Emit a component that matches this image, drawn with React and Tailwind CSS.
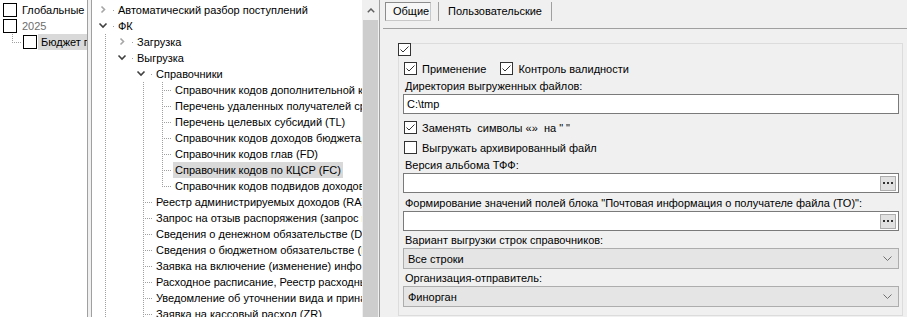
import React from 'react';

const dots = (n, fn) => Array.from({ length: n }, (_, i) => fn(i));

// one 19x16 cell of tree guide lines
function Guide({ kind }) {
  return (
    <svg width="19" height="16" className="shrink-0" shapeRendering="crispEdges">
      {(kind === 'line' || kind === 'tee') &&
        dots(8, (i) => <rect key={'v' + i} x="9" y={i * 2} width="1" height="1" fill="#a0a0a0" />)}
      {kind === 'ell' &&
        dots(5, (i) => <rect key={'v' + i} x="9" y={i * 2} width="1" height="1" fill="#a0a0a0" />)}
      {(kind === 'tee' || kind === 'ell') &&
        dots(5, (i) => <rect key={'h' + i} x={9 + i * 2} y="8" width="1" height="1" fill="#a0a0a0" />)}
      {kind === 'col' && (
        <>
          <polyline points="5.5,4.5 8.5,7.5 5.5,10.5" fill="none" stroke="#a6a6a6" strokeWidth="1.6" shapeRendering="auto" />
          <rect x="17" y="8" width="1" height="1" fill="#a0a0a0" />
        </>
      )}
      {kind === 'exp' && (
        <>
          <polyline points="3.5,5.5 7,9 10.5,5.5" fill="none" stroke="#404040" strokeWidth="1.6" shapeRendering="auto" />
          <rect x="17" y="8" width="1" height="1" fill="#a0a0a0" />
        </>
      )}
    </svg>
  );
}

const L = ['line', 'none', 'line', 'tee'];
const R = ['line', 'none', 'tee'];

const midRows = [
  { t: 'Автоматический разбор поступлений', g: ['col'] },
  { t: 'ФК', g: ['exp'] },
  { t: 'Загрузка', g: ['line', 'col'] },
  { t: 'Выгрузка', g: ['line', 'exp'] },
  { t: 'Справочники', g: ['line', 'none', 'exp'] },
  { t: 'Справочник кодов дополнительной классификации', g: L },
  { t: 'Перечень удаленных получателей средств', g: L },
  { t: 'Перечень целевых субсидий (TL)', g: L },
  { t: 'Справочник кодов доходов бюджета, администрируемых', g: L },
  { t: 'Справочник кодов глав (FD)', g: L },
  { t: 'Справочник кодов по КЦСР (FC)', g: L, sel: true },
  { t: 'Справочник кодов подвидов доходов (FP)', g: ['line', 'none', 'line', 'ell'] },
  { t: 'Реестр администрируемых доходов (RA)', g: R },
  { t: 'Запрос на отзыв распоряжения (запрос на аннулирование)', g: R },
  { t: 'Сведения о денежном обязательстве (DO)', g: R },
  { t: 'Сведения о бюджетном обязательстве (BO)', g: R },
  { t: 'Заявка на включение (изменение) информации', g: R },
  { t: 'Расходное расписание, Реестр расходных расписаний', g: R },
  { t: 'Уведомление об уточнении вида и принадлежности платежа', g: R },
  { t: 'Заявка на кассовый расход (ZR)', g: R },
];

function TreeBox() {
  return <div className="w-[14px] h-[14px] shrink-0 border border-black bg-white" />;
}

function Check({ on = true }) {
  return (
    <svg width="13" height="13" className="shrink-0" shapeRendering="crispEdges">
      <rect x="0.5" y="0.5" width="12" height="12" fill="#fff" stroke="#333" />
      {on && (
        <polyline points="2.5,6.5 5,9 10.5,3.5" fill="none" stroke="#333" strokeWidth="1" shapeRendering="auto" />
      )}
    </svg>
  );
}

function Field({ value = '', dots: withDots }) {
  return (
    <div className="flex items-center h-[20px] border border-[#7a7a7a] bg-white pl-[3px] pr-[2px]">
      <span className="flex-1">{value}</span>
      {withDots && (
        <div className="w-[16px] h-[15px] border border-[#adadad] bg-[#e1e1e1] flex items-center justify-center">
          <svg width="10" height="4" shapeRendering="crispEdges">
            <rect x="0" y="1" width="2" height="2" fill="#333" />
            <rect x="4" y="1" width="2" height="2" fill="#333" />
            <rect x="8" y="1" width="2" height="2" fill="#333" />
          </svg>
        </div>
      )}
    </div>
  );
}

function Select({ value }) {
  return (
    <div className="flex items-center h-[21px] border border-[#adadad] bg-[#e5e5e5] pl-[4px] pr-[6px]">
      <span className="flex-1">{value}</span>
      <svg width="9" height="5">
        <polyline points="0.5,0.5 4.5,4.5 8.5,0.5" fill="none" stroke="#707070" strokeWidth="1" />
      </svg>
    </div>
  );
}

export default function App() {
  return (
    <div className="w-[907px] h-[317px] flex overflow-hidden bg-[#f0f0f0] text-black text-[11px] leading-[16px] font-['Liberation_Sans',Arial,sans-serif]">
      {/* left tree */}
      <div className="w-[88px] shrink-0 bg-white border-r border-[#a0a0a0] pt-[2px] overflow-hidden">
        <div className="flex items-center h-[16px] pl-[3px]">
          <TreeBox />
          <span className="ml-[1px] pl-[4px] whitespace-nowrap">Глобальные</span>
        </div>
        <div className="flex items-center h-[16px] pl-[3px]">
          <TreeBox />
          <span className="ml-[1px] pl-[4px] text-[#6d6d6d]">2025</span>
        </div>
        <div className="flex items-center h-[16px] pl-[3px]">
          <svg width="20" height="16" className="shrink-0" shapeRendering="crispEdges">
            {dots(5, (i) => <rect key={'v' + i} x="9" y={i * 2} width="1" height="1" fill="#a0a0a0" />)}
            {dots(5, (i) => <rect key={'h' + i} x={9 + i * 2} y="8" width="1" height="1" fill="#a0a0a0" />)}
          </svg>
          <TreeBox />
          <span className="ml-[1px] pl-[3px] flex-1 bg-[#d9d9d9] whitespace-nowrap">Бюджет г</span>
        </div>
      </div>

      <div className="w-[3px] shrink-0 bg-[#f0f0f0]" />

      {/* middle tree */}
      <div className="w-[289px] shrink-0 flex bg-white border-l border-r border-[#a0a0a0]">
        <div className="flex-1 overflow-hidden pt-[2px] pl-[4px]">
          {midRows.map((r, i) => (
            <div key={i} className="flex items-center h-[16px] whitespace-nowrap">
              {r.g.map((k, j) => (
                <Guide key={j} kind={k} />
              ))}
              <span className={'ml-[1px] px-[2px] ' + (r.sel ? 'bg-[#d9d9d9]' : '')}>{r.t}</span>
            </div>
          ))}
        </div>
        <div className="w-[17px] shrink-0 bg-[#f0f0f0] flex flex-col">
          <div className="h-[20px] flex items-center justify-center">
            <svg width="8" height="5">
              <polyline points="0.8,4.2 4,1 7.2,4.2" fill="none" stroke="#606060" strokeWidth="1.5" />
            </svg>
          </div>
          <div className="flex-1 ml-[1px] w-[15px] bg-[#cdcdcd]" />
        </div>
      </div>

      {/* right panel */}
      <div className="flex-1 flex flex-col bg-[#f0f0f0]">
        <div className="h-[28px] shrink-0 flex items-start pt-[2px] pl-[5px]">
          <div className="w-[46px] h-[19px] border border-[#8c8c8c] border-r-[#c8c8c8] border-b-[#c8c8c8] bg-[#f7f7f7] pl-[7px] leading-[17px]">
            Общие
          </div>
          <div className="ml-[7px] w-px h-[19px] bg-[#a0a0a0]" />
          <div className="pl-[9px] pr-[9px] h-[19px] leading-[19px]">Пользовательские</div>
          <div className="w-px h-[19px] bg-[#a0a0a0]" />
        </div>
        <div className="flex-1 ml-[3px] border-t border-[#a0a0a0] pt-[14px] pl-[15px] pr-[4px]">
          <div className="h-[273px] border border-[#dcdcdc] pl-[4px] pr-[3px] flex flex-col">
            <div className="-mt-px -ml-[5px]">
              <Check />
            </div>
            <div className="mt-[5px] h-[15px] flex items-center ml-px">
              <Check />
              <span className="ml-[5px]">Применение</span>
              <span className="ml-[14px] flex items-center">
                <Check />
                <span className="ml-[5px]">Контроль валидности</span>
              </span>
            </div>
            <div className="mt-[2px] h-[16px] ml-[2px]">Директория выгруженных файлов:</div>
            <Field value="C:\tmp" />
            <div className="mt-[6px] h-[15px] flex items-center ml-px">
              <Check />
              <span className="ml-[5px] whitespace-pre">{'Заменять  символы «»  на " "'}</span>
            </div>
            <div className="mt-[5px] h-[15px] flex items-center ml-px">
              <Check on={false} />
              <span className="ml-[5px]">Выгружать архивированный файл</span>
            </div>
            <div className="mt-[2px] h-[16px] ml-[2px]">Версия альбома ТФФ:</div>
            <Field dots />
            <div className="mt-[2px] h-[16px] ml-[2px]">
              Формирование значений полей блока "Почтовая информация о получателе файла (ТО)":
            </div>
            <Field dots />
            <div className="mt-[1px] h-[16px] ml-[2px]">Вариант выгрузки строк справочников:</div>
            <Select value="Все строки" />
            <div className="mt-[1px] h-[16px] ml-[2px]">Организация-отправитель:</div>
            <Select value="Финорган" />
          </div>
        </div>
      </div>
    </div>
  );
}
